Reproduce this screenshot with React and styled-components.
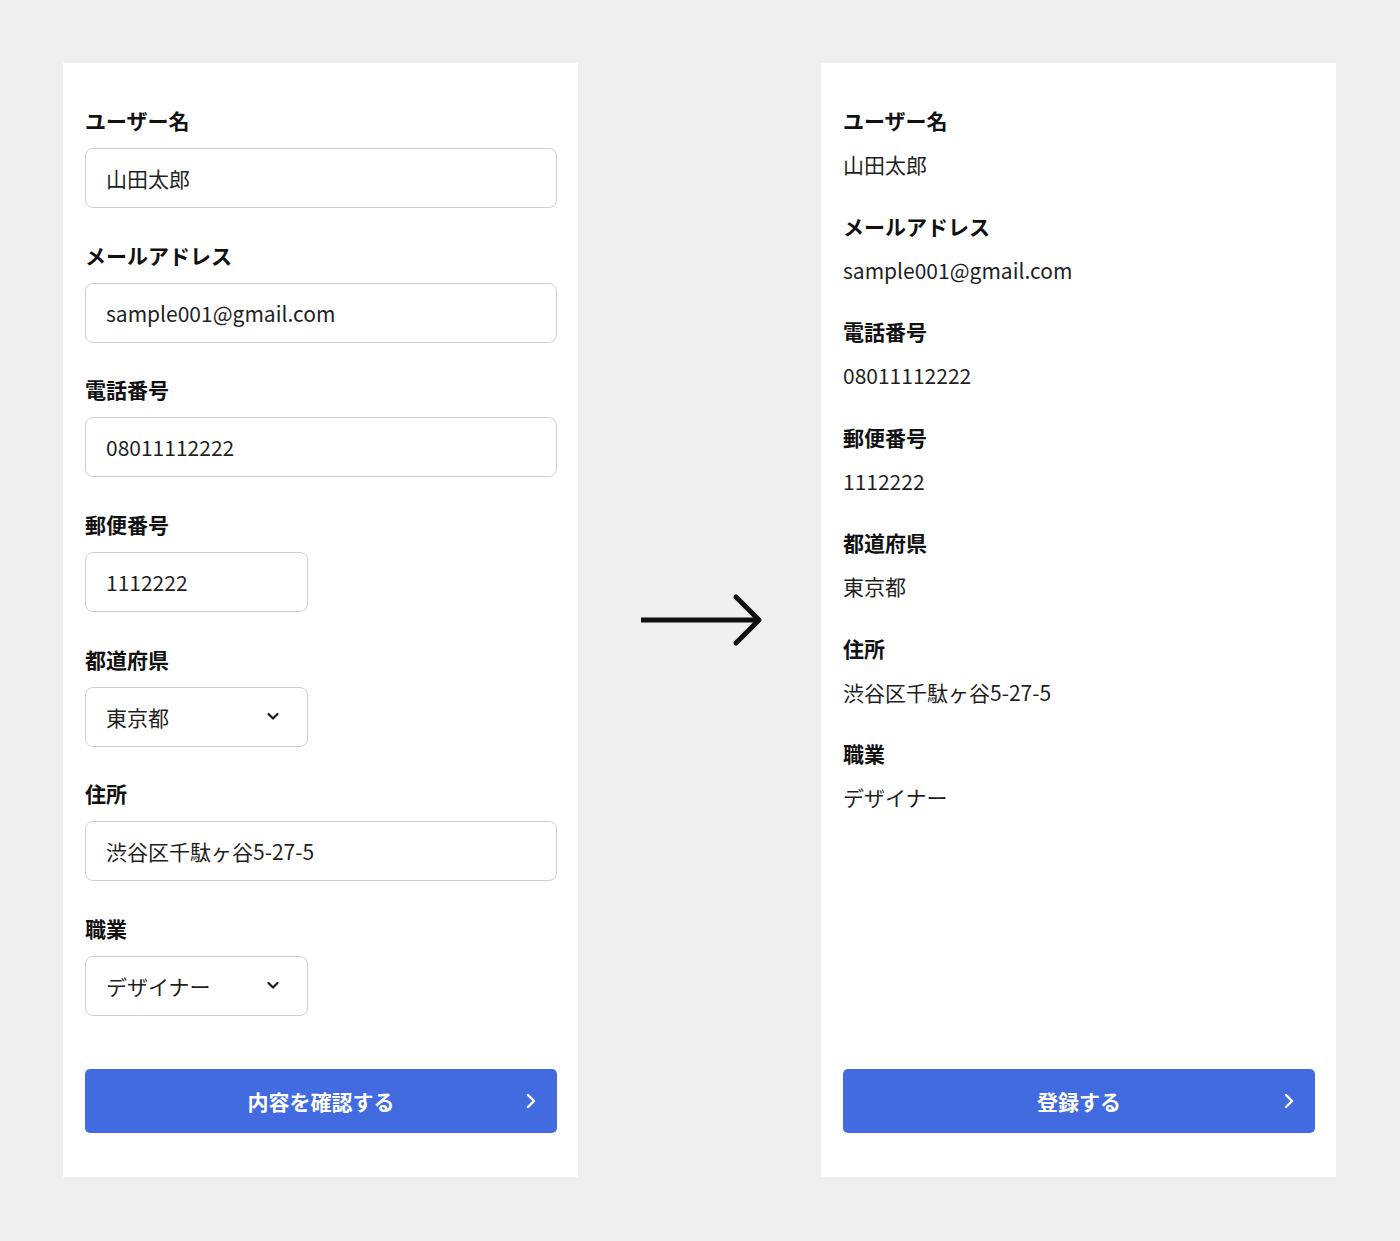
import React from "react";
import styled, { createGlobalStyle } from "styled-components";

const Global = createGlobalStyle`
  html, body { margin: 0; padding: 0; background: #efefef; }
  body { font-family: "Noto Sans CJK JP", "Noto Sans", sans-serif; color: #1a1a1a; }
  * { box-sizing: border-box; }
`;

const Page = styled.div`
  display: flex;
  align-items: stretch;
  justify-content: flex-start;
  padding: 63px 63px 64px;
  min-height: 1241px;
`;

const Card = styled.div`
  width: 515px;
  flex: none;
  background: #fff;
  padding: 43px 21px 44px 22px;
  display: flex;
  flex-direction: column;
`;

const Middle = styled.div`
  width: 243px;
  flex: none;
  display: flex;
  align-items: center;
  justify-content: center;
  padding-left: 7px;
`;

const Field = styled.div`
  display: flex;
  flex-direction: column;
  margin-bottom: 32.67px;
`;

const Label = styled.div`
  font-size: 21px;
  line-height: 28px;
  font-weight: 700;
  color: #111;
  margin-bottom: 14px;
`;

const InputBox = styled.div`
  width: ${(p) => (p.$short ? "223px" : "100%")};
  height: 60px;
  border: 1px solid #cfcfcf;
  border-radius: 8px;
  padding: 0 20px;
  display: flex;
  align-items: center;
  justify-content: space-between;
  font-size: 21px;
  color: #1f1f1f;
`;

const Chevron = styled.svg`
  width: 14px;
  height: 14px;
  margin-right: 7px;
  margin-top: -2px;
`;

const Spacer = styled.div`
  flex: 1;
`;

const Button = styled.div`
  position: relative;
  height: 64px;
  border-radius: 5px;
  background: #426be0;
  color: #fff;
  font-size: 21px;
  font-weight: 700;
  display: flex;
  align-items: center;
  justify-content: center;
`;

const ButtonIcon = styled.svg`
  position: absolute;
  right: 19px;
  top: 50%;
  transform: translateY(-50%);
  width: 14px;
  height: 16px;
`;

const ViewField = styled.div`
  display: flex;
  flex-direction: column;
  margin-bottom: 29.5px;
`;

const ViewLabel = styled(Label)`
  margin-bottom: 13px;
`;

const Value = styled.div`
  font-size: 21px;
  line-height: 35px;
  color: #1f1f1f;
`;

const fields = [
  { label: "ユーザー名", value: "山田太郎" },
  { label: "メールアドレス", value: "sample001@gmail.com" },
  { label: "電話番号", value: "08011112222" },
  { label: "郵便番号", value: "1112222", short: true },
  { label: "都道府県", value: "東京都", short: true, select: true },
  { label: "住所", value: "渋谷区千駄ヶ谷5-27-5" },
  { label: "職業", value: "デザイナー", short: true, select: true },
];

const ChevronDown = () => (
  <Chevron viewBox="0 0 14 14">
    <path d="M2.5 5 L7 9.5 L11.5 5" fill="none" stroke="#1a1a1a" strokeWidth="2.2" strokeLinecap="round" strokeLinejoin="round" />
  </Chevron>
);

const ChevronRight = () => (
  <ButtonIcon viewBox="0 0 14 16">
    <path d="M4 2 L10 8 L4 14" fill="none" stroke="#fff" strokeWidth="2.4" strokeLinecap="round" strokeLinejoin="round" />
  </ButtonIcon>
);

export default function App() {
  return (
    <>
      <Global />
      <Page>
        <Card>
          {fields.map((f) => (
            <Field key={f.label}>
              <Label>{f.label}</Label>
              <InputBox $short={f.short}>
                <span>{f.value}</span>
                {f.select && <ChevronDown />}
              </InputBox>
            </Field>
          ))}
          <Spacer />
          <Button>
            内容を確認する
            <ChevronRight />
          </Button>
        </Card>
        <Middle>
          <svg width="124" height="54" viewBox="0 0 124 54">
            <path d="M0 27 H118" stroke="#111" strokeWidth="5" fill="none" />
            <path d="M95 4 L118 27 L95 50" stroke="#111" strokeWidth="5" fill="none" strokeLinecap="round" strokeLinejoin="round" />
          </svg>
        </Middle>
        <Card>
          {fields.map((f) => (
            <ViewField key={f.label}>
              <ViewLabel>{f.label}</ViewLabel>
              <Value>{f.value}</Value>
            </ViewField>
          ))}
          <Spacer />
          <Button>
            登録する
            <ChevronRight />
          </Button>
        </Card>
      </Page>
    </>
  );
}
